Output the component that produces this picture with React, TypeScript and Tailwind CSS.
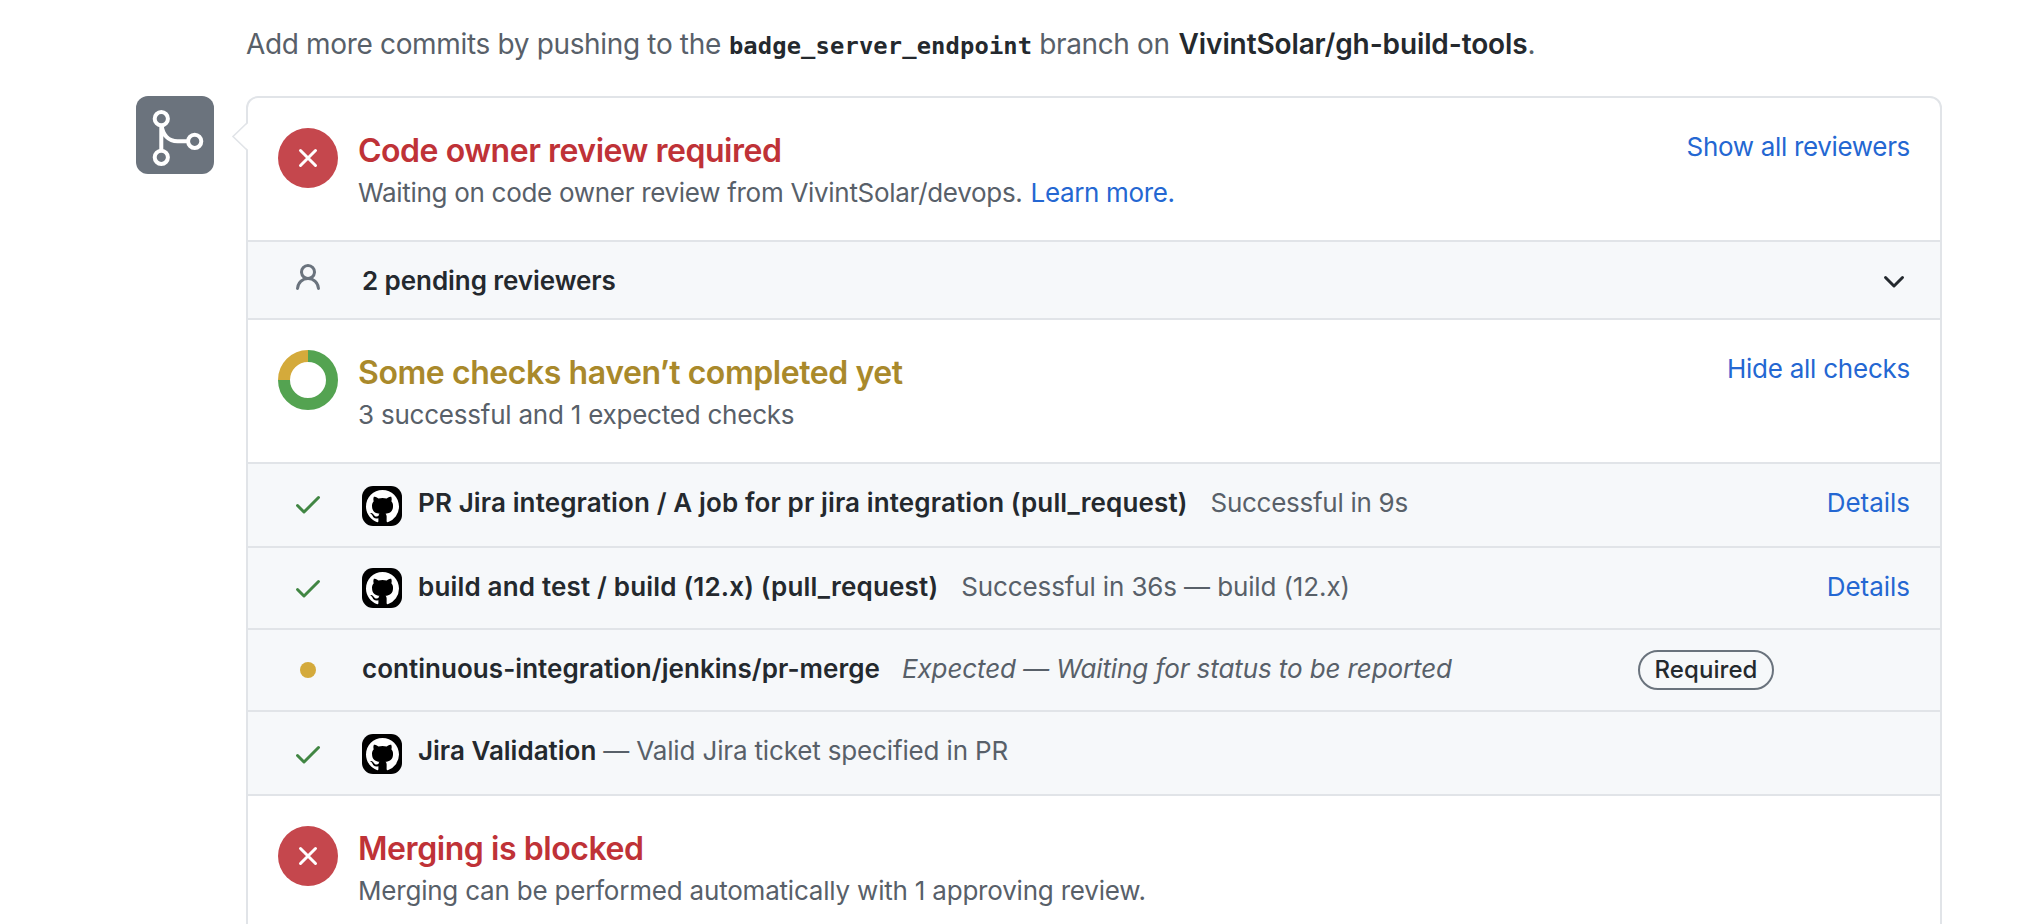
import type { ReactNode } from "react";

const CHECK =
  "M13.78 4.22a.75.75 0 010 1.06l-7.25 7.25a.75.75 0 01-1.06 0L2.22 9.28a.75.75 0 011.06-1.06L6 10.94l6.72-6.72a.75.75 0 011.06 0z";
const PERSON =
  "M10.5 5a2.5 2.5 0 11-5 0 2.5 2.5 0 015 0zm.061 3.073a4 4 0 10-5.123 0 6.004 6.004 0 00-3.431 5.142.75.75 0 001.498.07 4.5 4.5 0 018.99 0 .75.75 0 101.498-.07 6.005 6.005 0 00-3.432-5.142z";
const CHEVRON =
  "M12.78 6.22a.75.75 0 010 1.06l-4.25 4.25a.75.75 0 01-1.06 0L3.22 7.28a.75.75 0 011.06-1.06L8 9.94l3.72-3.72a.75.75 0 011.06 0z";
const MARK =
  "M8 0C3.58 0 0 3.58 0 8c0 3.54 2.29 6.53 5.47 7.59.4.07.55-.17.55-.38 0-.19-.01-.82-.01-1.49-2.01.37-2.53-.49-2.69-.94-.09-.23-.48-.94-.82-1.13-.28-.15-.68-.52-.01-.53.63-.01 1.08.58 1.23.82.72 1.21 1.87.87 2.33.66.07-.52.28-.87.51-1.07-1.78-.2-3.64-.89-3.64-3.95 0-.87.31-1.59.82-2.15-.08-.2-.36-1.02.08-2.12 0 0 .67-.21 2.2.82.64-.18 1.32-.27 2-.27.68 0 1.36.09 2 .27 1.53-1.04 2.2-.82 2.2-.82.44 1.1.16 1.92.08 2.12.51.56.82 1.27.82 2.15 0 3.07-1.87 3.75-3.65 3.95.29.25.54.73.54 1.48 0 1.07-.01 1.93-.01 2.2 0 .21.15.46.55.38A8.013 8.013 0 0016 8c0-4.42-3.58-8-8-8z";

function Octicon({ d, className }: { d: string; className: string }) {
  return (
    <svg viewBox="0 0 16 16" className={`size-8 shrink-0 fill-current ${className}`}>
      <path fillRule="evenodd" d={d} />
    </svg>
  );
}

function GitHubAvatar() {
  return (
    <div className="mr-4 flex size-10 shrink-0 items-center justify-center rounded-[11px] bg-black text-white">
      <svg viewBox="0 0 16 16" className="size-[33px] fill-current">
        <path fillRule="evenodd" d={MARK} />
      </svg>
    </div>
  );
}

function MergeAvatar() {
  return (
    <div className="size-[78px] shrink-0 rounded-xl bg-[#6b737d]">
      <svg viewBox="0 0 78 78" className="size-[78px]" fill="none" stroke="white" strokeWidth="4">
        <circle cx="25.3" cy="22.7" r="6.6" />
        <circle cx="25.3" cy="61.3" r="6.6" />
        <circle cx="58.7" cy="45.3" r="6.6" />
        <path d="M25.3 29v26M25.6 29C26.5 39 32.5 45.3 41.5 45.3H52" />
      </svg>
    </div>
  );
}

function BlockedIcon() {
  return (
    <svg viewBox="0 0 60 60" className="size-[60px] shrink-0">
      <circle cx="30" cy="30" r="30" fill="#c5474d" />
      <path d="M22.5 22.5l15 15m0-15l-15 15" stroke="white" strokeWidth="3" strokeLinecap="round" />
    </svg>
  );
}

function ProgressDonut() {
  return (
    <svg viewBox="0 0 60 60" className="size-[60px] shrink-0" fill="none" strokeWidth="12">
      <path d="M30 6A24 24 0 1 1 6 30" stroke="#54a351" />
      <path d="M6 30A24 24 0 0 1 30 6" stroke="#d4aa3b" />
    </svg>
  );
}

function Section({
  icon,
  title,
  titleClass,
  action,
  children,
}: {
  icon: ReactNode;
  title: string;
  titleClass: string;
  action?: ReactNode;
  children: ReactNode;
}) {
  return (
    <section className="flex h-36 items-start border-b-2 border-[#e1e4e8] px-[30px] pt-[29px]">
      <div className="pt-px">{icon}</div>
      <div className="ml-5 grow pt-[3px]">
        <h3 className={`text-[32px] leading-[42px] font-semibold ${titleClass}`}>{title}</h3>
        <p className="flex pt-px text-[26px] leading-10 text-[#586069]">{children}</p>
      </div>
      {action}
    </section>
  );
}

function CheckRow({ className, children }: { className: string; children: ReactNode }) {
  return (
    <li className={`flex items-start border-b-2 border-[#e1e4e8] bg-[#f6f8fa] px-[30px] pt-[19px] text-[26px] leading-10 ${className}`}>
      {children}
    </li>
  );
}

export default function App() {
  return (
    <div className="h-[924px] w-[2030px] overflow-hidden bg-white pl-[136px] font-['Inter',sans-serif] whitespace-nowrap text-[#24292e]">
      <p className="flex h-24 items-baseline pt-6 pl-[110px] text-[28px] leading-10 text-[#586069]">
        <span className="tracking-[-0.34px]">Add more commits by pushing to the</span>
        <span className="ml-2 font-['DejaVu_Sans_Mono',monospace] text-[23.8px] font-bold tracking-[0.118px] text-[#24292e]">
          badge_server_endpoint
        </span>
        <span className="ml-[7px] tracking-[-0.371px]">branch on</span>
        <span className="ml-[9px] font-semibold tracking-[-0.115px] text-[#24292e]">VivintSolar/gh-build-tools</span>
        <span>.</span>
      </p>

      <div className="flex items-start">
        <MergeAvatar />
        <div className="relative ml-8 h-[900px] w-[1696px] rounded-xl border-2 border-[#e1e4e8]">
          <svg viewBox="0 0 18 32" className="absolute top-[22px] -left-[17px] h-8 w-[18px]">
            <path d="M18 2L2.5 16.5 18 31z" fill="white" />
            <path d="M16.5 2.5L2 16.5l14.5 14" fill="none" stroke="#e1e4e8" strokeWidth="1.6" />
          </svg>

          <Section
            icon={<BlockedIcon />}
            title="Code owner review required"
            titleClass="text-[#bf3237] tracking-[-0.471px]"
            action={<a className="text-[26px] leading-10 tracking-[-0.331px] text-[#2467d2]">Show all reviewers</a>}
          >
            <span className="tracking-[-0.3px]">Waiting on code owner review from VivintSolar/devops.</span>
            <a className="ml-2 tracking-[-0.346px] text-[#2467d2]">Learn more.</a>
          </Section>

          <div className="flex h-[78px] items-start border-b-2 border-[#e1e4e8] bg-[#f6f8fa] px-[30px] pt-[19px] text-[26px] leading-10">
            <Octicon d={PERSON} className="mt-px ml-3.5 text-[#6a737d]" />
            <span className="ml-[38px] grow font-semibold tracking-[-0.07px]">2 pending reviewers</span>
            <Octicon d={CHEVRON} className="mt-[3px]" />
          </div>

          <Section
            icon={<ProgressDonut />}
            title="Some checks haven’t completed yet"
            titleClass="text-[#a9892b] tracking-[-0.428px]"
            action={<a className="text-[26px] leading-10 tracking-[-0.245px] text-[#2467d2]">Hide all checks</a>}
          >
            <span className="tracking-[-0.227px]">3 successful and 1 expected checks</span>
          </Section>

          <ul>
            <CheckRow className="h-[84px]">
              <Octicon d={CHECK} className="mt-[5px] mr-[38px] ml-3.5 text-[#418643]" />
              <div className="mt-[3px]">
                <GitHubAvatar />
              </div>
              <span className="font-semibold tracking-[0.121px]">
                PR Jira integration / A job for pr jira integration (pull_request)
              </span>
              <span className="ml-[23px] grow tracking-[-0.278px] text-[#586069]">Successful in 9s</span>
              <a className="tracking-[-0.025px] text-[#2467d2]">Details</a>
            </CheckRow>
            <CheckRow className="h-[82px]">
              <Octicon d={CHECK} className="mt-[5px] mr-[38px] ml-3.5 text-[#418643]" />
              <div className="mt-px">
                <GitHubAvatar />
              </div>
              <span className="font-semibold tracking-[0.175px]">build and test / build (12.x) (pull_request)</span>
              <span className="ml-[23px] grow tracking-[-0.13px] text-[#586069]">Successful in 36s — build (12.x)</span>
              <a className="tracking-[-0.025px] text-[#2467d2]">Details</a>
            </CheckRow>
            <CheckRow className="h-[82px]">
              <span className="mt-[13px] mr-[46px] ml-[22px] size-4 shrink-0 rounded-full bg-[#d4aa3b]" />
              <span className="font-semibold tracking-[0.043px]">continuous-integration/jenkins/pr-merge</span>
              <em className="ml-[22px] grow tracking-[-0.106px] text-[#586069]">
                Expected — Waiting for status to be reported
              </em>
              <span className="mt-px mr-[136px] flex h-10 w-[136px] items-center justify-center rounded-full border-2 border-[#6a737d] text-2xl font-medium tracking-[0.063px]">
                Required
              </span>
            </CheckRow>
            <CheckRow className="h-[84px]">
              <Octicon d={CHECK} className="mt-[7px] mr-[38px] ml-3.5 text-[#418643]" />
              <div className="mt-[3px]">
                <GitHubAvatar />
              </div>
              <span className="font-semibold">Jira Validation</span>
              <span className="ml-[7px] tracking-[-0.152px] text-[#586069]">— Valid Jira ticket specified in PR</span>
            </CheckRow>
          </ul>

          <Section
            icon={<BlockedIcon />}
            title="Merging is blocked"
            titleClass="text-[#bf3237] tracking-[-0.43px]"
          >
            <span className="tracking-[-0.205px]">
              Merging can be performed automatically with 1 approving review.
            </span>
          </Section>
        </div>
      </div>
    </div>
  );
}
